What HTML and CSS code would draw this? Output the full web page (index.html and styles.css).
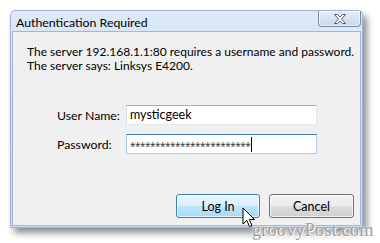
FILE: index.html
```html
<!DOCTYPE html>
<html lang="en">

<head>
    <meta charset="UTF-8">
    <title>Authentication Required</title>
    <link rel="stylesheet" href="styles.css">
</head>

<body>
    <div class="window">
        <div class="titlebar">
            <span class="title">Authentication Required</span>
            <div class="close-btn">
                <svg width="14" height="10" viewBox="0 0 14 10">
                    <path d="M1.5 0.5 H4.5 L7 3 L9.5 0.5 H12.5 L8.5 5 L12.5 9.5 H9.5 L7 7 L4.5 9.5 H1.5 L5.5 5 Z"
                        fill="#fff" stroke="#56606e" stroke-width="1" stroke-linejoin="round" />
                </svg>
            </div>
        </div>

        <div class="panel">
            <div class="message">
                <p>The server 192.168.1.1:80 requires a username and password.</p>
                <p>The server says: Linksys E4200.</p>
            </div>

            <div class="login-form">
                <label class="field-label">User Name:</label>
                <div class="field">mysticgeek</div>
                <label class="field-label">Password:</label>
                <div class="field focused">
                    <span class="stars">************************</span><span class="caret"></span>
                </div>
            </div>

            <div class="buttons">
                <button class="btn default">Log In</button>
                <button class="btn">Cancel</button>
            </div>
        </div>
    </div>

    <!-- mouse pointer over the Log In button -->
    <svg class="pointer" width="14" height="21" viewBox="0 0 14 21">
        <path d="M1 1 L1 17 L4.8 13.4 L7.6 19.6 L10 18.6 L7.3 12.5 L12.5 12.5 Z"
            fill="#fff" stroke="#000" stroke-width="1" stroke-linejoin="round" />
    </svg>

    <div class="watermark">groovyPost.com</div>
</body>

</html>
```

FILE: styles.css
```css
/* Windows 7 style login dialog */
body {
    margin: 0;
    width: 380px;
    height: 243px;
    background: #ffffff;
    font-family: 'Lato', 'Liberation Sans', sans-serif;
    position: relative;
    overflow: hidden;
}

.window {
    margin: 10px 0 0 10px;
    width: 351px;
    background: linear-gradient(180deg, #dce9f8 0%, #cddff3 40%, #c6d9ef 100%);
    border: 1px solid #9fb4cf;
    border-radius: 5px 5px 0 0;
    box-shadow: 4px 5px 7px rgba(0, 0, 0, 0.45);
}

.titlebar {
    height: 20px;
    display: flex;
    align-items: center;
    justify-content: space-between;
}

.title {
    font-size: 12.3px;
    color: #000;
    padding-left: 5px;
    padding-top: 3px;
}

.close-btn {
    width: 41px;
    height: 15px;
    align-self: flex-start;
    margin-right: 1px;
    border: 1px solid #7c8aa0;
    border-top: none;
    border-radius: 0 0 4px 4px;
    background: linear-gradient(180deg, #e6eef8 0%, #d8e3f1 50%, #c9d8ec 100%);
    box-shadow: inset 0 0 0 1px rgba(255, 255, 255, 0.6);
    display: flex;
    align-items: center;
    justify-content: center;
}

.panel {
    margin: 0 1px 1px 1px;
    height: 193px;
    background: #f0f0f0;
    border: 1px solid #a3b7d3;
    display: flex;
    flex-direction: column;
}

.message {
    padding: 13px 0 0 14px;
    font-size: 12px;
    line-height: 14px;
    color: #000;
    white-space: nowrap;
}

.message p {
    margin: 0;
}

.login-form {
    margin: 32px 0 0 44px;
    display: grid;
    grid-template-columns: 69px 191px;
    row-gap: 9px;
    align-items: center;
}

.field-label {
    font-size: 12.3px;
    color: #000;
}

.field {
    height: 18px;
    background: #ffffff;
    border: 1px solid #e2e8ee;
    border-top-color: #abadb3;
    border-left-color: #dbdfe6;
    font-size: 12.5px;
    line-height: 18px;
    padding-left: 3px;
    color: #000;
    display: flex;
    align-items: center;
}

.field.focused {
    border-color: #b5cfe7;
    border-top-color: #3d7bad;
    border-left-color: #a4c9e3;
}

.stars {
    font-family: 'Open Sans', sans-serif;
    font-size: 10px;
    letter-spacing: -0.5px;
    color: #2c2c2c;
    padding-top: 3px;
}

.caret {
    width: 1px;
    height: 15px;
    background: #000;
    margin-left: 1px;
}

.buttons {
    margin-top: auto;
    margin-bottom: 7px;
    display: flex;
    justify-content: flex-end;
    gap: 9px;
    padding-right: 6px;
}

.btn {
    width: 85px;
    height: 24px;
    border: 1px solid #707070;
    border-radius: 3px;
    background: linear-gradient(180deg, #f2f2f2 0%, #ebebeb 48%, #dddddd 52%, #cfcfcf 100%);
    box-shadow: inset 0 0 0 1px rgba(255, 255, 255, 0.7);
    font-family: 'Lato', 'Liberation Sans', sans-serif;
    font-size: 12.5px;
    color: #000;
    padding: 0;
}

.btn.default {
    width: 84px;
    border-color: #3c7fb1;
    background: linear-gradient(180deg, #eaf6fd 0%, #d9f0fc 48%, #bee6fd 52%, #a7d9f5 100%);
}

.pointer {
    position: absolute;
    left: 242px;
    top: 207px;
}

.watermark {
    position: absolute;
    left: 252px;
    top: 220px;
    font-family: 'Liberation Serif', serif;
    font-size: 18px;
    color: #a0a0a0;
    letter-spacing: 0.3px;
    text-shadow: 0 0 2px #ffffff, 1px 1px 0 #ffffff;
}
```
